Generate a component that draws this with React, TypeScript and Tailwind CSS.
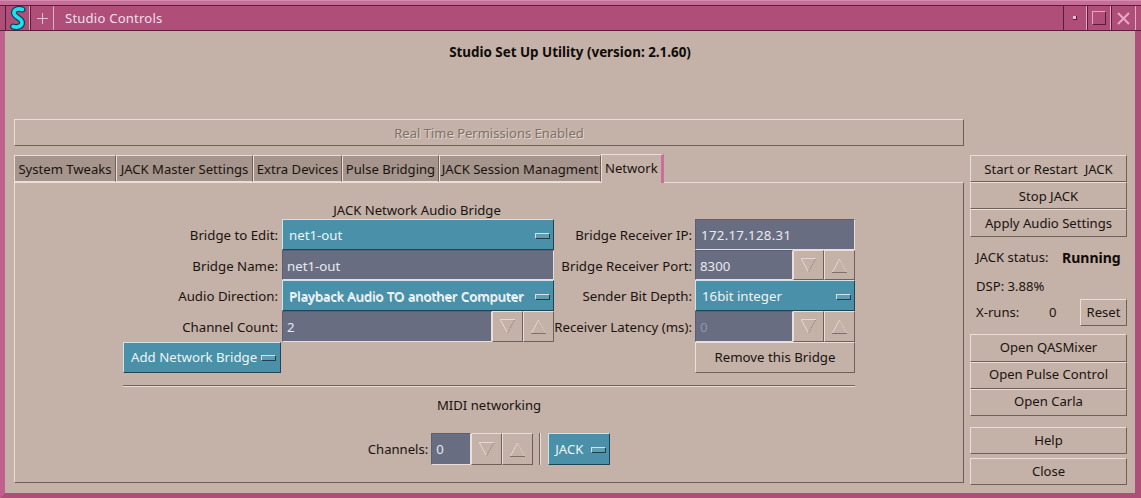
import React from 'react';

const bevel = 'border border-t-[#eadfd8] border-l-[#eadfd8] border-r-[#6f615a] border-b-[#6f615a]';
const sunken = 'border border-t-[#5b5f70] border-l-[#5b5f70] border-r-[#eadfd8] border-b-[#eadfd8]';

const Btn: React.FC<{ label: string; className?: string }> = ({ label, className = '' }) => (
  <button className={`${bevel} flex items-center justify-center pt-[1px] bg-[#c4b1a7] text-[#1a1410] whitespace-pre ${className}`}>
    {label}
  </button>
);

const Grip = () => <span className="block w-[15px] h-[6px] bg-[#5f9db2] border border-r-[#1f3f4e] border-b-[#1f3f4e] border-t-[#cfe3ea] border-l-[#cfe3ea] shrink-0" />;

const Choice: React.FC<{ label: string; className?: string; bold?: boolean }> = ({ label, className = '', bold }) => (
  <div className={`flex items-center justify-between bg-[#4a90a8] border border-t-[#cfe3ea] border-l-[#cfe3ea] border-r-[#1f4454] border-b-[#1f4454] pl-[6px] pr-[3px] pt-[3px] text-[#eef4f6] ${className}`}>
    <span className={bold ? '[text-shadow:0.6px_0.6px_0.6px_#f2f6f8]' : ''}>{label}</span>
    <Grip />
  </div>
);

const Arrow: React.FC<{ up?: boolean }> = ({ up }) => (
  <button className={`${bevel} w-[31px] h-full flex items-center justify-center bg-[#c4b1a7] shrink-0`}>
    <svg width="17" height="17" viewBox="0 0 17 17" fill="none">
      {up ? (
        <>
          <path d="M8.5 2 L1.5 15" stroke="#e4d8d1" />
          <path d="M8.5 2 L15.5 15" stroke="#e4d8d1" strokeDasharray="1 1" />
          <path d="M1 15.5 H16" stroke="#7f7169" />
        </>
      ) : (
        <>
          <path d="M1 1.5 H16" stroke="#e4d8d1" />
          <path d="M1.5 2 L8.5 15" stroke="#e4d8d1" />
          <path d="M15.5 2 L8.5 15" stroke="#8b7d75" strokeDasharray="1 1" />
        </>
      )}
    </svg>
  </button>
);

const Field: React.FC<{ value: string; dim?: boolean; className?: string }> = ({ value, dim, className = '' }) => (
  <div className={`${sunken} bg-[#696d82] flex items-center pl-[4px] pt-[3px] ${dim ? 'text-[#8f93a5]' : 'text-[#e8eaf0]'} ${className}`}>
    {value}
  </div>
);

const Spin: React.FC<{ value: string; dim?: boolean; className?: string; fieldClass?: string }> = ({ value, dim, className = '', fieldClass = '' }) => (
  <div className={`flex ${className}`}>
    <Field value={value} dim={dim} className={`flex-1 min-w-0 ${fieldClass}`} />
    <Arrow />
    <Arrow up />
  </div>
);

const Label: React.FC<{ text: string; right?: boolean }> = ({ text, right }) => (
  <div className={`flex items-center justify-end pt-[3px] text-[#1a1410] whitespace-nowrap ${right ? 'pr-[3px]' : 'pr-[4px]'}`}>{text}</div>
);

const tabs = [
  { label: 'System Tweaks', w: 'w-[102px]' },
  { label: 'JACK Master Settings', w: 'w-[137px]' },
  { label: 'Extra Devices', w: 'w-[89px]' },
  { label: 'Pulse Bridging', w: 'w-[97px]' },
  { label: 'JACK Session Managment', w: 'w-[162px]' },
];

const TitleCell: React.FC<{ w: string; children?: React.ReactNode }> = ({ w, children }) => (
  <div className={`${w} h-full flex items-center justify-center border-r border-r-[#e2a9c3] border-l border-l-[#5c1c3c] shrink-0`}>{children}</div>
);

export default function App() {
  return (
    <div className="w-[1141px] h-[498px] overflow-hidden flex flex-col bg-[#c4b1a7] text-[13.1px] leading-none font-['Noto_Sans',sans-serif]">
      {/* title bar */}
      <div className="h-[31px] shrink-0 bg-[#b04e7a] flex flex-col">
        <div className="h-[5px] bg-[#c56f98] border-t border-t-[#d68aae]" />
        <div className="flex-1 flex items-stretch border-t border-t-[#5c1c3c] border-b border-b-[#5c1c3c] pl-[5px] pr-[5px]">
          <TitleCell w="w-[25px]">
            <svg width="16" height="24" viewBox="0 0 16 24" fill="none" strokeLinecap="round">
              <path d="M12.5 3.5 C8 2 3.5 3.5 4 7.5 C4.5 11 11.5 12 12 16 C12.5 20.5 7 22 3 20.5" stroke="#123b52" strokeWidth="6" />
              <path d="M12.5 3.5 C8 2 3.5 3.5 4 7.5 C4.5 11 11.5 12 12 16 C12.5 20.5 7 22 3 20.5" stroke="#19e3ee" strokeWidth="3.6" />
            </svg>
          </TitleCell>
          <TitleCell w="w-[24px]">
            <svg width="11" height="11" viewBox="0 0 11 11"><path d="M5.5 0 V11 M0 5.5 H11" stroke="#e9bcd1" strokeWidth="1" /></svg>
          </TitleCell>
          <div className="flex-1 flex items-center pl-[11px] pt-[1px] text-[#f2dfe8] tracking-[0.2px]">Studio Controls</div>
          <TitleCell w="w-[24px]">
            <span className="block w-[4px] h-[4px] bg-[#e9bcd1] border-r border-b border-[#5c1c3c]" />
          </TitleCell>
          <TitleCell w="w-[24px]">
            <span className="block w-[14px] h-[14px] border border-t-[#e2a9c3] border-l-[#e2a9c3] border-r-[#5c1c3c] border-b-[#5c1c3c]" />
          </TitleCell>
          <TitleCell w="w-[25px]">
            <svg width="13" height="13" viewBox="0 0 13 13"><path d="M1 1 L12 12 M12 1 L1 12" stroke="#e9a9c6" strokeWidth="2" /></svg>
          </TitleCell>
        </div>
      </div>

      {/* window body */}
      <div className="flex-1 min-h-0 flex flex-col border-l-[5px] border-l-[#c0608c] border-r-[6px] border-r-[#b04e7a] border-b-[5px] border-b-[#b04e7a]">
        <div className="h-[31px] pt-[15px] text-center font-bold text-[#0f0b08] shrink-0 text-[13.4px]">Studio Set Up Utility (version: 2.1.60)</div>
        <div className="flex-1 min-h-0 flex pl-[9px] pr-[8px] gap-[6px]">
          {/* left column */}
          <div className="w-[950px] flex flex-col pt-[57px]">
            <div className={`${bevel} h-[27px] flex items-center justify-center pt-[1px] text-[13px] text-[#7f716a] [text-shadow:1px_1px_0_#e3d8d1] shrink-0`}>Real Time Permissions Enabled</div>

            {/* tabs */}
            <div className="flex items-end h-[28px] mt-[8px] shrink-0 relative z-10">
              {tabs.map((t) => (
                <div key={t.label} className={`${t.w} h-[27px] flex items-center justify-center pt-[3px] bg-[#a6958c] text-[#1a1410] whitespace-nowrap border-t border-t-[#eadfd8] border-l border-l-[#eadfd8] border-r border-r-[#6f615a] border-b border-b-[#eadfd8]`}>{t.label}</div>
              ))}
              <div className="w-[63px] h-[29px] pl-[3px] flex items-center text-[#1a1410] bg-[#c4b1a7] border-t border-t-[#eadfd8] border-l border-l-[#eadfd8] border-r-[3px] border-r-[#c86f9c] mb-[-1px]">Network</div>
            </div>

            {/* tab pane */}
            <div className="h-[301px] border border-t-[#eadfd8] border-l-[#eadfd8] border-r-[#6f615a] border-b-[#6f615a] flex flex-col items-center">
              <div className="w-[732px] mt-[21px]">
                <div className="w-[431px] text-center ml-[-1px] pl-[159px] h-[15px] text-[#1a1410] whitespace-nowrap">JACK Network Audio Bridge</div>
                <div className="grid grid-cols-[159px_272px_141px_160px] grid-rows-[31px_30px_31px_31px_31px] text-[13.25px]">
                  <Label text="Bridge to Edit:" />
                  <Choice label="net1-out" />
                  <Label right text="Bridge Receiver IP:" />
                  <Field value="172.17.128.31" className="!pl-[5px] tracking-[0.3px]" />

                  <Label text="Bridge Name:" />
                  <Field value="net1-out" />
                  <Label right text="Bridge Receiver Port:" />
                  <Spin value="8300" />

                  <Label text="Audio Direction:" />
                  <Choice label="Playback Audio TO another Computer" bold />
                  <Label right text="Sender Bit Depth:" />
                  <Choice label="16bit integer" />

                  <Label text="Channel Count:" />
                  <Spin value="2" />
                  <Label right text="Receiver Latency (ms):" />
                  <Spin value="0" dim />

                  <Choice label="Add Network Bridge" className="w-[158px] !pt-[1px] !pl-[7px] !pr-[4px]" />
                  <div />
                  <div />
                  <Btn label="Remove this Bridge" />
                </div>
                <div className="mt-[12px] h-[2px] border-t border-t-[#6f615a] border-b border-b-[#eadfd8]" />
              </div>
              <div className="mt-[12px] text-[#1a1410]">MIDI networking</div>
              <div className="mt-[21px] h-[32px] flex items-stretch">
                <div className="flex items-center pr-[3px] pt-[1px] text-[#1a1410]">Channels:</div>
                <Spin value="0" className="w-[102px]" fieldClass="!pt-[1px]" />
                <div className="w-[2px] ml-[6px] mr-[7px] border-l border-l-[#6f615a] border-r border-r-[#eadfd8]" />
                <Choice label="JACK" className="w-[62px] !pt-[1px]" />
              </div>
            </div>
          </div>

          {/* right column */}
          <div className="w-[157px] flex flex-col pt-[93px]">
            <Btn label="Start or Restart  JACK" className="h-[27px] !pt-[3px]" />
            <Btn label="Stop JACK" className="h-[27px] !pt-[3px]" />
            <Btn label="Apply Audio Settings" className="h-[28px]" />
            <div className="flex items-center h-[15px] mt-[13px] pl-[6px] text-[#1a1410]">
              <span className="w-[86px]">JACK status:</span>
              <span className="font-bold text-[#0f0b08] text-[14px]">Running</span>
            </div>
            <div className="h-[15px] mt-[14px] pl-[6px] pt-[1px] flex items-center text-[#1a1410]">DSP: 3.88%</div>
            <div className="flex items-center h-[27px] mt-[5px] pl-[6px] text-[#1a1410]">
              <span className="w-[73px]">X-runs:</span>
              <span className="w-[31px]">0</span>
              <Btn label="Reset" className="w-[47px] h-full" />
            </div>
            <div className="mt-[8px] flex flex-col">
              <Btn label="Open QASMixer" className="h-[28px] !pt-0 pb-[1px]" />
              <Btn label="Open Pulse Control" className="h-[27px] !pt-0 pb-[1px]" />
              <Btn label="Open Carla" className="h-[27px] !pt-0 pb-[1px]" />
            </div>
            <Btn label="Help" className="h-[27px] mt-[11px]" />
            <Btn label="Close" className="h-[27px] mt-[4px]" />
          </div>
        </div>
      </div>
    </div>
  );
}
